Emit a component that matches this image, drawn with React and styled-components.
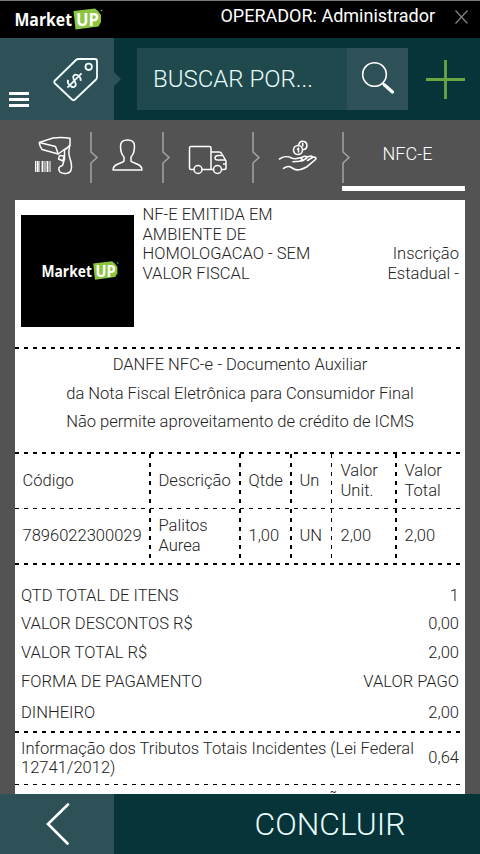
import React from 'react';
import styled, { createGlobalStyle } from 'styled-components';

const GlobalStyle = createGlobalStyle`
  * {
    box-sizing: border-box;
  }

  body {
    margin: 0;
    background-color: #535353;
    font-family: Roboto, "Liberation Sans", sans-serif;
    font-weight: 300;
  }
`;

const dashes = (direction, color = '#000') =>
  `repeating-linear-gradient(${direction}, ${color} 0 4px, transparent 4px 9px)`;

const Screen = styled.div`
  width: 480px;
  height: 854px;
  display: flex;
  flex-direction: column;
  overflow: hidden;
  background-color: #535353;
`;

const TopBar = styled.header`
  height: 38px;
  flex: none;
  display: flex;
  align-items: flex-start;
  padding: 6px 12px 0 14px;
  border-top: 1px solid #777;
  background-color: #000;
  color: #fff;
`;

const Operator = styled.div`
  margin-left: auto;
  font-size: 18px;
  font-weight: 400;
  line-height: 18px;
`;

const CloseButton = styled.button`
  margin: 3px 0 0 20px;
  padding: 0;
  border: 0;
  background: none;
  line-height: 0;
`;

const SearchBar = styled.div`
  height: 82px;
  flex: none;
  display: flex;
  background-color: #063438;
`;

const MenuPanel = styled.div`
  position: relative;
  width: 114px;
  display: flex;
  align-items: flex-end;
  padding: 0 0 13px 9px;
  background-color: #2d5156;

  &::after {
    content: '';
    position: absolute;
    left: 114px;
    top: 34px;
    border-left: 7px solid #2d5156;
    border-top: 7px solid transparent;
    border-bottom: 7px solid transparent;
  }
`;

const MenuLines = styled.div`
  width: 20px;
  height: 15px;
  display: flex;
  flex-direction: column;
  justify-content: space-between;

  span {
    height: 3px;
    background-color: #fff;
  }
`;

const TagIcon = styled.svg`
  margin: 0 0 4px 24px;
`;

const SearchField = styled.div`
  width: 210px;
  height: 62px;
  margin: 10px 0 0 23px;
  padding-left: 16px;
  background-color: #20494d;
  color: #e6fbfb;
  font-size: 24px;
  line-height: 62px;
  white-space: nowrap;
`;

const SearchButton = styled.button`
  width: 61px;
  height: 62px;
  margin-top: 10px;
  padding: 0;
  border: 0;
  background-color: #2d5156;
`;

const AddButton = styled.button`
  margin: 22px 0 0 18px;
  padding: 0;
  height: 39px;
  border: 0;
  background: none;
`;

const Steps = styled.nav`
  height: 80px;
  flex: none;
  display: flex;
  padding-right: 15px;
`;

const Step = styled.div`
  width: ${props => props.$width}px;
  padding: ${props => props.$top}px 0 0 ${props => props.$left}px;
`;

const Separator = styled.svg`
  width: 9px;
  height: 52px;
  margin: 12px -9px 0 0;
  flex: none;
`;

const ActiveStep = styled.div`
  width: 123px;
  height: 71px;
  padding-left: 8px;
  border-bottom: 5px solid #fff;
  color: #fff;
  font-size: 18px;
  line-height: 67px;
  text-align: center;
`;

const Receipt = styled.main`
  flex: 1;
  min-height: 0;
  margin: 0 15px;
  overflow: hidden;
  background-color: #fff;
  color: #222;
  font-size: 16.55px;
  line-height: 19.6px;
`;

const Issuer = styled.section`
  height: 147px;
  display: flex;
  padding: 5px 6px 0;
`;

const LogoBox = styled.div`
  width: 113px;
  height: 112px;
  margin: 10px 8.5px 0 0;
  padding-left: 5px;
  display: flex;
  align-items: center;
  justify-content: center;
  background-color: #000;
`;

const Registration = styled.div`
  margin: 39px 0 0 auto;
  text-align: right;
`;

const Rule = styled.div`
  height: ${props => (props.$thin ? 1 : 2)}px;
  margin-right: ${props => props.$inset || 0}px;
  background: ${dashes('90deg')};
`;

const Danfe = styled.section`
  height: 103px;
  padding-top: 2px;
  text-align: center;
  line-height: 28.5px;
`;

const Items = styled.div`
  display: grid;
  grid-template-columns: 134px 90px 51px 41px 64px 70px;
`;

const Cell = styled.div`
  height: 54px;
  display: flex;
  align-items: center;
  padding-left: ${props => (props.$first ? 7.5 : 9.5)}px;
  background: ${props => (props.$first ? 'none' : dashes('180deg'))} no-repeat left / ${props => (props.$thin ? 1 : 2)}px 100%;
`;

const ThinLine = styled.div`
  grid-column: 1 / -1;
  height: 1px;
  background: ${dashes('90deg')};
`;

const Totals = styled.section`
  padding: 16px 6px 0;
`;

const Total = styled.div`
  height: ${props => props.$height || 28.7}px;
  display: flex;
  align-items: center;
  justify-content: space-between;
`;

const Taxes = styled.div`
  height: 51px;
  display: flex;
  align-items: center;
  justify-content: space-between;
  padding: 0 6px;
  white-space: nowrap;
`;

const NextLine = styled.div`
  padding: 6px 0 0 313px;
`;

const Footer = styled.footer`
  height: 60px;
  flex: none;
  display: flex;
  background-color: #063438;
`;

const BackButton = styled.button`
  width: 114px;
  padding: 2px 0 0 2px;
  border: 0;
  background-color: #2d5156;
`;

const FinishButton = styled.button`
  width: 366px;
  padding: 0 0 0 66px;
  border: 0;
  background: none;
  color: #e6fbfb;
  font: 300 31.8px/60px Roboto, sans-serif;
`;

const Logo = ({ width }) => (
  <svg width={width} height={width * 24 / 90} viewBox="0 0 90 24">
    <path d="M59.500 4 81 1.500 84 4 87 8v7l-2.500 4.500L61.500 22.500Z" fill="#8cc63f" />
    <g fill="#fff" fontFamily="Open Sans" fontWeight="700" fontSize="18">
      <text x="0.500" y="19" textLength="57.500" lengthAdjust="spacingAndGlyphs">Market</text>
      <text x="62" y="19" textLength="23" lengthAdjust="spacingAndGlyphs">UP</text>
    </g>
    <circle cx="87.500" cy="3.500" r="0.800" fill="#8cc63f" />
  </svg>
);

const StepSeparator = () => (
  <Separator viewBox="0 0 9 52" fill="none" stroke="#a5a5a5" strokeWidth="1.500">
    <path d="M1 0v20l6 5.500-6 5.500v20" />
  </Separator>
);

const columns = ['Código', 'Descrição', 'Qtde', 'Un', <>Valor<br />Unit.</>, <>Valor<br />Total</>];
const product = ['7896022300029', <>Palitos<br />Aurea</>, '1,00', 'UN', '2,00', '2,00'];

const totals = [
  { label: 'QTD TOTAL DE ITENS', value: '1' },
  { label: 'VALOR DESCONTOS R$', value: '0,00' },
  { label: 'VALOR TOTAL R$', value: '2,00' },
  { label: 'FORMA DE PAGAMENTO', value: 'VALOR PAGO' },
  { label: 'DINHEIRO', value: '2,00', height: 35 },
];

const renderCells = cells =>
  cells.map((cell, index) => (
    <Cell key={index} $first={index === 0} $thin={index === 4}>
      <span>{cell}</span>
    </Cell>
  ));

const App = () => (
  <Screen>
    <GlobalStyle />

    <TopBar>
      <Logo width={90} />
      <Operator>OPERADOR: Administrador</Operator>
      <CloseButton aria-label="Fechar">
        <svg width="13" height="14" viewBox="0 0 13 14" stroke="#858585" strokeWidth="1.200">
          <path d="M0.500 0.500 12.500 13.500M12.500 0.500 0.500 13.500" />
        </svg>
      </CloseButton>
    </TopBar>

    <SearchBar>
      <MenuPanel>
        <MenuLines>
          <span />
          <span />
          <span />
        </MenuLines>
        <TagIcon width="47" height="46" viewBox="0 0 47 46" fill="none" stroke="#f4ffff" strokeWidth="1.800">
          <path d="M25.500 2H42q2 0 2 2.500V20q0 1.500-1 2.500L22 42.500q-1.500 1.500-3 0L2 26.500q-1.500-1.500 0-3L23 3Q24 2 25.500 2Z" />
          <circle cx="35.700" cy="9.800" r="3.200" />
          <g transform="translate(21.500 23.500) rotate(45)">
            <path d="M4.500-4C3-7-4-7-4-3S4.500-.5 4.500 3.500-3.500 8-5 4M0-10V10" />
          </g>
        </TagIcon>
      </MenuPanel>
      <SearchField>BUSCAR POR...</SearchField>
      <SearchButton aria-label="Buscar">
        <svg width="34" height="34" viewBox="0 0 34 34" fill="none" stroke="#fff" strokeLinecap="round">
          <circle cx="13.500" cy="13.500" r="11.800" strokeWidth="1.600" />
          <path d="m22 22.500 2 2" strokeWidth="2" />
          <path d="m23.500 24 8 7" strokeWidth="3.300" />
        </svg>
      </SearchButton>
      <AddButton aria-label="Adicionar">
        <svg width="39" height="39" viewBox="0 0 39 39" stroke="#6aa543" strokeWidth="2.800">
          <path d="M0 19.500h39M19.500 0v39" />
        </svg>
      </AddButton>
    </SearchBar>

    <Steps>
      <Step $width={90} $top={16} $left={34}>
        <svg width="40" height="40" viewBox="0 0 40 40" fill="none" stroke="#fff" strokeWidth="1.500" strokeLinejoin="round">
          <path d="M5.300 6.500 19 2Q28 .8 36 2.300V9Q34 12 29 14.500L24.300 18 8 13.500Q5.500 10 5.300 6.500Z" />
          <path d="M5.300 6.500 21.500 10.500 24.300 18M36 9C34.500 14 34.500 18 35.800 22Q38.500 30 37 34C36 38 29 38.500 26 36 23.500 33 25 30 28.500 29.500L30.500 23V14" />
          <path d="m25.500 19.500 4.500.5-1 5-4.500-2z" />
          <path d="M1.500 25v11M5 25v11M11 25v11M16 25v11" strokeWidth="1" />
          <path d="M3.500 25v11M8.500 25v11M13.500 25v11" strokeWidth="1.800" />
        </svg>
      </Step>
      <StepSeparator />
      <Step $width={72} $top={18} $left={22}>
        <svg width="31" height="34" viewBox="0 0 31 34" fill="none" stroke="#fff" strokeWidth="1.500" strokeLinejoin="round">
          <path d="M12 23v-4C9 16 8.500 12 8.500 8c0-4 3-6 7-6s7 2 7 6c0 4-.5 8-3.500 11v4c2 3 11 2 11 9H1c0-7 9-6 11-9Z" />
        </svg>
      </Step>
      <StepSeparator />
      <Step $width={90} $top={25} $left={26}>
        <svg width="40" height="30" viewBox="0 0 40 30" fill="none" stroke="#fff" strokeWidth="1.500" strokeLinejoin="round">
          <path d="M6 24.500H3q-1.500 0-1.500-1.500V3q0-1.500 1.500-1.500h18.500q1.500 0 1.500 1.500v21.500h-9M23 7h8q2 0 3 2l4 7v7q0 1.500-2 1.500h-2M23 24.500h2.500" />
          <path d="M37 15h-7.500q-2.500 0-2.500-2t2.500-2.500H34M35 19h3" />
          <circle cx="10" cy="24.500" r="4" />
          <circle cx="29.500" cy="24.500" r="4" />
        </svg>
      </Step>
      <StepSeparator />
      <Step $width={90} $top={20} $left={26}>
        <svg width="40" height="33" viewBox="0 0 40 33" fill="none" stroke="#fff" strokeWidth="1.600" strokeLinecap="round" strokeLinejoin="round">
          <circle cx="20" cy="10" r="4.500" />
          <path d="M20.800 4.500a4.100 4.100 0 1 1 4.500 5M19.500 9l1-.8V12M24.700 3.500v2.500" />
          <path d="M1.500 19C5 16.500 10 16 13.500 18q3 1.500 7.500 0c4-.5 4 2.500 0 3.200l-6 .6M22 18l4.500-1.800q4-.2 2 2L24 21M28 17.500l4.500-1.500q3 0 1 2l-4 2.500M33.500 18l2-1q3.500 0 2 2.500L29 26.700Q20 31.500 16 29l-4-2.200q-3-1-6.500 1.500" />
        </svg>
      </Step>
      <StepSeparator />
      <ActiveStep>NFC-E</ActiveStep>
    </Steps>

    <Receipt>
      <Issuer>
        <LogoBox>
          <Logo width={79} />
        </LogoBox>
        <div>
          NF-E EMITIDA EM<br />
          AMBIENTE DE<br />
          HOMOLOGACAO - SEM<br />
          VALOR FISCAL
        </div>
        <Registration>
          Inscrição<br />
          Estadual -
        </Registration>
      </Issuer>
      <Rule $inset={4} />

      <Danfe>
        <div>DANFE NFC-e - Documento Auxiliar</div>
        <div>da Nota Fiscal Eletrônica para Consumidor Final</div>
        <div>Não permite aproveitamento de crédito de ICMS</div>
      </Danfe>

      <Rule />
      <Items>
        {renderCells(columns)}
        <ThinLine />
        {renderCells(product)}
      </Items>
      <Rule $inset={4} />

      <Totals>
        {totals.map(total => (
          <Total key={total.label} $height={total.height}>
            <span>{total.label}</span>
            <span>{total.value}</span>
          </Total>
        ))}
      </Totals>
      <Rule $inset={4} />

      <Taxes>
        <span>
          Informação dos Tributos Totais Incidentes (Lei Federal<br />
          12741/2012)
        </span>
        <span>0,64</span>
      </Taxes>
      <Rule $thin $inset={4} />
      <NextLine>Ã</NextLine>
    </Receipt>

    <Footer>
      <BackButton aria-label="Voltar">
        <svg width="24" height="42" viewBox="0 0 24 42" fill="none" stroke="#fff" strokeWidth="2.600" strokeLinecap="round">
          <path d="M22 1.500 2 21l19.500 19.500" />
        </svg>
      </BackButton>
      <FinishButton>CONCLUIR</FinishButton>
    </Footer>
  </Screen>
);

export default App;
